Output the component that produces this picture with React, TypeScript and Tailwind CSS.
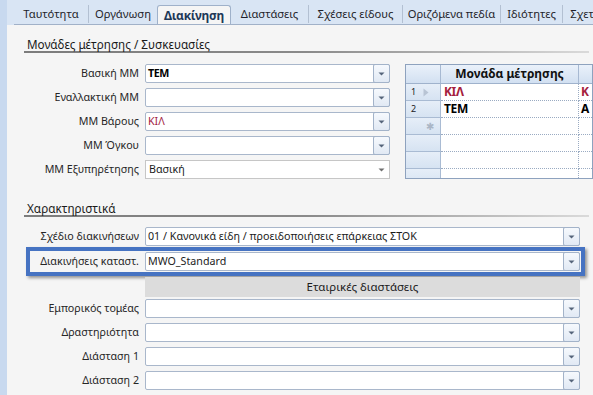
import React from 'react';

const TABS = [
  { label: 'Ταυτότητα', w: 'w-[75px]', sep: true },
  { label: 'Οργάνωση', w: 'w-[68px]', sep: false },
  { label: 'Διακίνηση', w: 'w-[74px]', active: true },
  { label: 'Διαστάσεις', w: 'w-[78px]', sep: true },
  { label: 'Σχέσεις είδους', w: 'w-[94px]', sep: true },
  { label: 'Οριζόμενα πεδία', w: 'w-[98px]', sep: true },
  { label: 'Ιδιότητες', w: 'w-[62px]', sep: true },
  { label: 'Σχετικά είδη', w: 'w-[80px]', sep: false },
];

function Arrow() {
  return (
    <svg width="7" height="4" viewBox="0 0 7 4" className="block">
      <path d="M0.5 0.5 L6.5 0.5 L3.5 3.5 Z" fill="#55647a" />
    </svg>
  );
}

function Combo({
  value,
  tone = 'plain',
  width,
}: {
  value?: string;
  tone?: 'plain' | 'bold' | 'red';
  width: string;
}) {
  const txt =
    tone === 'bold'
      ? 'font-bold text-black tracking-[-0.4px]'
      : tone === 'red'
        ? 'text-[#a3233f]'
        : 'text-[#1b1b1b]';
  return (
    <div className={`${width} h-[19px] flex bg-white border border-[#a9b7cb] rounded-[2px]`}>
      <div className={`flex-1 pl-[2px] leading-[17px] truncate ${txt}`}>{value}</div>
      <div className="w-[17px] -my-px -mr-px flex items-center justify-center border border-[#a3b3c9] rounded-[2px] bg-gradient-to-b from-[#f6f9fd] to-[#e1e9f4]">
        <Arrow />
      </div>
    </div>
  );
}

function SelectBox({ value, width }: { value: string; width: string }) {
  return (
    <div className={`${width} h-[19px] flex items-center bg-white border border-[#c6c6c6]`}>
      <div className="flex-1 pl-[3px] leading-[17px] text-[#1b1b1b]">{value}</div>
      <div className="pr-[4px]">
        <svg width="7" height="4" viewBox="0 0 7 4" className="block">
          <path d="M0.5 0.5 L6.5 0.5 L3.5 3.5 Z" fill="#707070" />
        </svg>
      </div>
    </div>
  );
}

function Row({
  label,
  labelW,
  children,
}: {
  label: string;
  labelW: string;
  children: React.ReactNode;
}) {
  return (
    <div className="flex items-center gap-[6px] h-[19px]">
      <div className={`${labelW} text-right text-[#262626] whitespace-nowrap`}>{label}</div>
      {children}
    </div>
  );
}

function SectionTitle({ title }: { title: string }) {
  return (
    <div>
      <div className="pl-[3px] leading-[14px] text-[11.7px] text-[#1a1a1a]">{title}</div>
      <div className="h-[2px] mr-[4px] bg-gradient-to-r from-[#7c7c7c] via-[#8a8a8a] to-[#dadada]" />
    </div>
  );
}

function UnitGrid() {
  const rows = [
    { n: '1', marker: 'cur', a: 'ΚΙΛ', b: 'Κ', red: true },
    { n: '2', marker: '', a: 'ΤΕΜ', b: 'Α', red: false },
    { n: '', marker: 'new', a: '', b: '', red: false },
    { n: '', marker: '', a: '', b: '', red: false },
    { n: '', marker: '', a: '', b: '', red: false },
    { n: '', marker: '', a: '', b: '', red: false },
  ];
  return (
    <div className="ml-[15px] w-[300px] h-[115px] overflow-hidden border border-[#8ea2be] bg-white text-[12px]">
      <div className="flex h-[19px] border-b border-[#9fb2cc]">
        <div className="w-[35px] border-r border-[#a7b9d2] bg-gradient-to-b from-[#eaf1fa] to-[#d2e0f1]" />
        <div className="w-[138px] border-r border-[#a7b9d2] flex items-center justify-center font-bold text-[#111] bg-gradient-to-b from-[#eaf1fa] to-[#d2e0f1]">
          Μονάδα μέτρησης
        </div>
        <div className="flex-1 bg-gradient-to-b from-[#eaf1fa] to-[#d2e0f1]" />
      </div>
      {rows.map((r, i) => (
        <div key={i} className="flex h-[17px]">
          <div className="w-[35px] border-r border-b border-[#a9bbd3] bg-gradient-to-b from-[#e6eef8] to-[#d6e3f2] flex items-center">
            <span className="w-[15px] pl-[5px] text-[9px] text-[#222]">{r.n}</span>
            {r.marker === 'cur' && (
              <svg width="6" height="9" viewBox="0 0 6 9" className="ml-[2px]">
                <path d="M0.5 0.5 L5.5 4.5 L0.5 8.5 Z" fill="#b8c4d4" />
              </svg>
            )}
            {r.marker === 'new' && (
              <span className="ml-[5px] text-[10px] leading-none text-[#aab6c6]">✱</span>
            )}
          </div>
          <div
            className={`w-[138px] border-r border-b border-dotted border-[#9aabc2] pl-[3px] leading-[16px] font-bold tracking-[-0.3px] ${r.red ? 'text-[#a5213c]' : 'text-black'}`}
          >
            {r.a}
          </div>
          <div
            className={`flex-1 border-b border-dotted border-[#9aabc2] pl-[2px] leading-[16px] font-bold ${r.red ? 'text-[#a5213c]' : 'text-black'}`}
          >
            {r.b}
          </div>
        </div>
      ))}
    </div>
  );
}

export default function App() {
  return (
    <div className="w-[593px] h-[395px] overflow-hidden flex bg-[#d9e5f4] font-['Noto_Sans','Liberation_Sans',sans-serif] text-[10.7px]">
      <div className="w-[7px] shrink-0 bg-[#c8d9ef]" />
      <div className="flex-1 flex flex-col min-w-0">
        <div className="h-[25px] shrink-0 flex items-end pl-[7px] text-[11.2px]">
          <div className="flex-1 flex items-end h-[25px] border-b border-[#a1b1c8] overflow-hidden">
            {TABS.map((t) =>
              t.active ? (
                <div
                  key={t.label}
                  className={`${t.w} shrink-0 h-[20px] -mb-px flex items-center justify-center border border-b-0 border-[#9fb1ca] rounded-t-[3px] bg-[#f5f5f5] font-bold text-[12px] text-[#1d3858] tracking-[-0.3px]`}
                >
                  {t.label}
                </div>
              ) : (
                <div
                  key={t.label}
                  className={`${t.w} shrink-0 h-[18px] mb-px flex items-center justify-center whitespace-nowrap text-[#1f1f2a] ${t.sep ? 'border-r border-[#b3c0d2]' : ''}`}
                >
                  {t.label}
                </div>
              ),
            )}
          </div>
        </div>

        <div className="flex-1 bg-[#f5f5f5] pl-[17px] pt-[12px]">
          <SectionTitle title="Μονάδες μέτρησης / Συσκευασίες" />

          <div className="flex items-start mt-[11px]">
            <div className="flex flex-col gap-[5px]">
              <Row label="Βασική ΜΜ" labelW="w-[115px]">
                <Combo value="ΤΕΜ" tone="bold" width="w-[245px]" />
              </Row>
              <Row label="Εναλλακτική ΜΜ" labelW="w-[115px]">
                <Combo width="w-[245px]" />
              </Row>
              <Row label="ΜΜ Βάρους" labelW="w-[115px]">
                <Combo value="ΚΙΛ" tone="red" width="w-[245px]" />
              </Row>
              <Row label="ΜΜ Όγκου" labelW="w-[115px]">
                <Combo width="w-[245px]" />
              </Row>
              <Row label="ΜΜ Εξυπηρέτησης" labelW="w-[115px]">
                <SelectBox value="Βασική" width="w-[245px]" />
              </Row>
            </div>
            <UnitGrid />
          </div>

          <div className="mt-[22px]">
            <SectionTitle title="Χαρακτηριστικά" />
          </div>

          <div className="mt-[10px]">
            <Row label="Σχέδιο διακινήσεων" labelW="w-[115px]">
              <Combo
                value="01 / Κανονικά είδη / προειδοποιήσεις επάρκειας ΣΤΟΚ"
                width="w-[435px]"
              />
            </Row>
          </div>

          <div className="mt-[1px] ml-[2px] w-[559px] border-[4px] border-[#4673c2] py-[1px] shadow-[2px_2px_3px_rgba(0,0,0,0.4)]">
            <Row label="Διακινήσεις καταστ." labelW="w-[109px]">
              <Combo value="MWO_Standard" width="w-[435px]" />
            </Row>
          </div>

          <div className="mt-[1px] ml-[121px] w-[435px] h-[20px] bg-[#dcdcdc] flex items-center justify-center text-[11.5px] text-[#1b1b1b]">
            Εταιρικές διαστάσεις
          </div>

          <div className="mt-[2px] flex flex-col gap-[5px]">
            <Row label="Εμπορικός τομέας" labelW="w-[115px]">
              <Combo width="w-[435px]" />
            </Row>
            <Row label="Δραστηριότητα" labelW="w-[115px]">
              <Combo width="w-[435px]" />
            </Row>
            <Row label="Διάσταση 1" labelW="w-[115px]">
              <Combo width="w-[435px]" />
            </Row>
            <Row label="Διάσταση 2" labelW="w-[115px]">
              <Combo width="w-[435px]" />
            </Row>
          </div>
        </div>
      </div>
    </div>
  );
}
